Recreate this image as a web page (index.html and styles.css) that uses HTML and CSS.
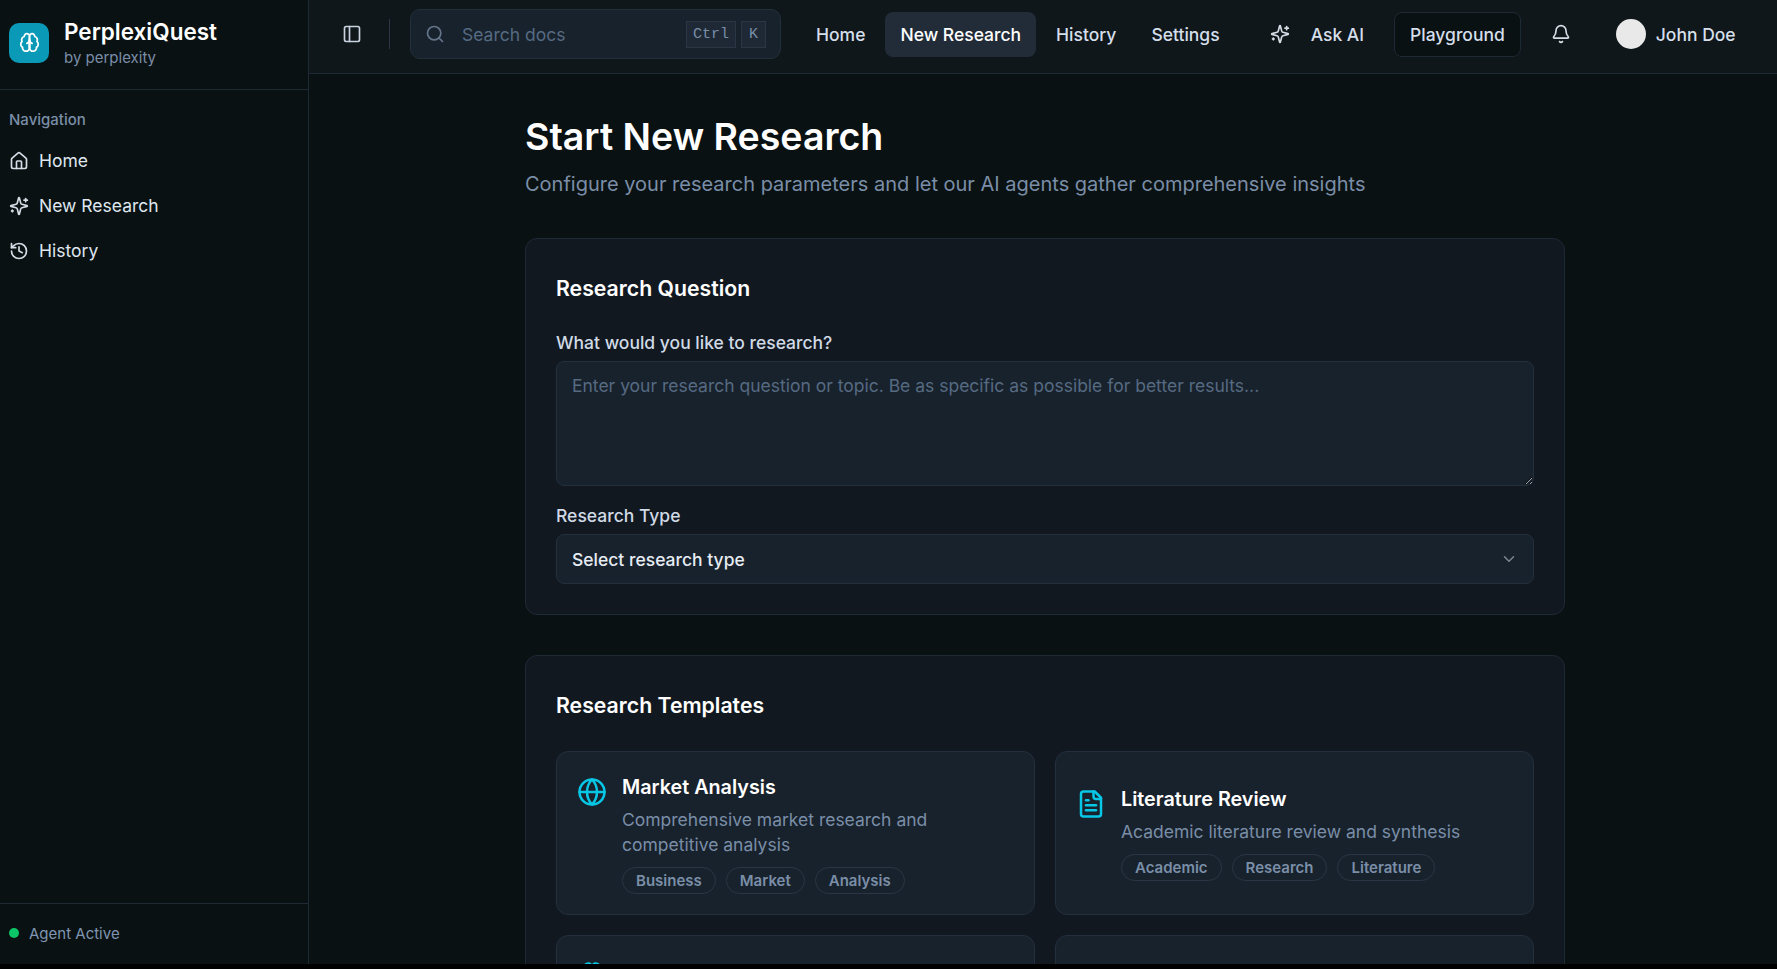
FILE: index.html
```html
<!DOCTYPE html>
<html lang="en">
<head>
  <meta charset="UTF-8" />
  <title>PerplexiQuest</title>
  <link rel="stylesheet" href="styles.css">
</head>
<body>
  <div class="app">

    <!-- sidebar -->
    <aside class="sidebar">
      <div class="brand">
        <div class="brand-logo">
          <svg class="icon" width="21" height="21" viewBox="0 0 24 24"><path d="M12 5a3 3 0 1 0-5.997.125 4 4 0 0 0-2.526 5.77 4 4 0 0 0 .556 6.588A4 4 0 1 0 12 18Z"/><path d="M12 5a3 3 0 1 1 5.997.125 4 4 0 0 1 2.526 5.77 4 4 0 0 1-.556 6.588A4 4 0 1 1 12 18Z"/><path d="M15 13a4.5 4.5 0 0 1-3-4 4.5 4.5 0 0 1-3 4"/><path d="M12 18v-9"/></svg>
        </div>
        <div class="brand-text">
          <div class="brand-name">PerplexiQuest</div>
          <div class="brand-sub">by perplexity</div>
        </div>
      </div>

      <nav class="side-nav">
        <div class="side-label">Navigation</div>
        <a class="side-link">
          <svg class="icon" width="20" height="20" viewBox="0 0 24 24"><path d="M15 21v-8a1 1 0 0 0-1-1h-4a1 1 0 0 0-1 1v8"/><path d="M3 10a2 2 0 0 1 .709-1.528l7-5.999a2 2 0 0 1 2.582 0l7 5.999A2 2 0 0 1 21 10v9a2 2 0 0 1-2 2H5a2 2 0 0 1-2-2z"/></svg>
          Home
        </a>
        <a class="side-link">
          <svg class="icon" width="20" height="20" viewBox="0 0 24 24"><path d="M9.937 15.5A2 2 0 0 0 8.5 14.063l-6.135-1.582a.5.5 0 0 1 0-.962L8.5 9.936A2 2 0 0 0 9.937 8.5l1.582-6.135a.5.5 0 0 1 .963 0L14.063 8.5A2 2 0 0 0 15.5 9.937l6.135 1.581a.5.5 0 0 1 0 .964L15.5 14.063a2 2 0 0 0-1.437 1.437l-1.582 6.135a.5.5 0 0 1-.963 0z"/><path d="M20 3v4"/><path d="M22 5h-4"/><path d="M4 17v2"/><path d="M5 18H3"/></svg>
          New Research
        </a>
        <a class="side-link">
          <svg class="icon" width="20" height="20" viewBox="0 0 24 24"><path d="M3 12a9 9 0 1 0 9-9 9.75 9.75 0 0 0-6.74 2.74L3 8"/><path d="M3 3v5h5"/><path d="M12 7v5l4 2"/></svg>
          History
        </a>
      </nav>

      <div class="side-footer">
        <span class="status-dot"></span>
        Agent Active
      </div>
    </aside>

    <div class="main">
      <!-- top bar -->
      <header class="topbar">
        <svg class="icon toggle" width="20" height="20" viewBox="0 0 24 24"><rect x="3" y="3" width="18" height="18" rx="2"/><path d="M9 3v18"/></svg>
        <div class="divider"></div>
        <div class="search">
          <svg class="icon" width="20" height="20" viewBox="0 0 24 24"><circle cx="11" cy="11" r="8"/><path d="m21 21-4.3-4.3"/></svg>
          <span class="search-text">Search docs</span>
          <kbd class="key">Ctrl</kbd>
          <kbd class="key">K</kbd>
        </div>
        <nav class="top-nav">
          <a class="top-link">Home</a>
          <a class="top-link active">New Research</a>
          <a class="top-link">History</a>
          <a class="top-link">Settings</a>
        </nav>
        <a class="ask-ai">
          <svg class="icon" width="20" height="20" viewBox="0 0 24 24"><path d="M9.937 15.5A2 2 0 0 0 8.5 14.063l-6.135-1.582a.5.5 0 0 1 0-.962L8.5 9.936A2 2 0 0 0 9.937 8.5l1.582-6.135a.5.5 0 0 1 .963 0L14.063 8.5A2 2 0 0 0 15.5 9.937l6.135 1.581a.5.5 0 0 1 0 .964L15.5 14.063a2 2 0 0 0-1.437 1.437l-1.582 6.135a.5.5 0 0 1-.963 0z"/><path d="M20 3v4"/><path d="M22 5h-4"/><path d="M4 17v2"/><path d="M5 18H3"/></svg>
          Ask AI
        </a>
        <a class="playground">Playground</a>
        <svg class="icon bell" width="20" height="20" viewBox="0 0 24 24"><path d="M10.268 21a2 2 0 0 0 3.464 0"/><path d="M3.262 15.326A1 1 0 0 0 4 17h16a1 1 0 0 0 .74-1.673C19.41 13.956 18 12.499 18 8A6 6 0 0 0 6 8c0 4.499-1.411 5.956-2.738 7.326"/></svg>
        <div class="user">
          <span class="avatar"></span>
          John Doe
        </div>
      </header>

      <!-- page body -->
      <main class="content">
        <h1 class="page-title">Start New Research</h1>
        <p class="page-sub">Configure your research parameters and let our AI agents gather comprehensive insights</p>

        <section class="panel">
          <h2 class="panel-title">Research Question</h2>
          <label class="field-label">What would you like to research?</label>
          <textarea class="question" placeholder="Enter your research question or topic. Be as specific as possible for better results..."></textarea>
          <label class="field-label type-label">Research Type</label>
          <div class="select">
            Select research type
            <svg class="icon" width="18" height="18" viewBox="0 0 24 24"><path d="m6 9 6 6 6-6"/></svg>
          </div>
        </section>

        <section class="panel">
          <h2 class="panel-title templates-title">Research Templates</h2>
          <div class="template-grid">
            <div class="template">
              <div class="template-row">
                <svg class="icon template-icon" width="30" height="30" viewBox="0 0 24 24"><circle cx="12" cy="12" r="10"/><path d="M12 2a14.5 14.5 0 0 0 0 20 14.5 14.5 0 0 0 0-20"/><path d="M2 12h20"/></svg>
                <div class="template-body">
                  <h3 class="template-name">Market Analysis</h3>
                  <p class="template-desc">Comprehensive market research and competitive analysis</p>
                  <div class="tags">
                    <span class="tag">Business</span>
                    <span class="tag">Market</span>
                    <span class="tag">Analysis</span>
                  </div>
                </div>
              </div>
            </div>
            <div class="template">
              <div class="template-row">
                <svg class="icon template-icon" width="30" height="30" viewBox="0 0 24 24"><path d="M15 2H6a2 2 0 0 0-2 2v16a2 2 0 0 0 2 2h12a2 2 0 0 0 2-2V7Z"/><path d="M14 2v4a2 2 0 0 0 2 2h4"/><path d="M10 9H8"/><path d="M16 13H8"/><path d="M16 17H8"/></svg>
                <div class="template-body">
                  <h3 class="template-name">Literature Review</h3>
                  <p class="template-desc">Academic literature review and synthesis</p>
                  <div class="tags">
                    <span class="tag">Academic</span>
                    <span class="tag">Research</span>
                    <span class="tag">Literature</span>
                  </div>
                </div>
              </div>
            </div>
            <div class="template template-cut">
              <svg class="icon template-icon" width="30" height="30" viewBox="0 0 24 24"><path d="M12 5a3 3 0 1 0-5.997.125 4 4 0 0 0-2.526 5.77 4 4 0 0 0 .556 6.588A4 4 0 1 0 12 18Z"/><path d="M12 5a3 3 0 1 1 5.997.125 4 4 0 0 1 2.526 5.77 4 4 0 0 1-.556 6.588A4 4 0 1 1 12 18Z"/></svg>
            </div>
            <div class="template"></div>
          </div>
        </section>
      </main>
    </div>
  </div>
</body>
</html>
```

FILE: styles.css
```css
/* page */
* {
  box-sizing: border-box;
}
body {
  margin: 0;
  background-color: #000;
  font-family: "Inter", "Liberation Sans", sans-serif;
  color: #e2e8f0;
}
.app {
  display: flex;
  height: 964px;
  overflow: hidden;
  background-color: #0a1112;
}
.icon {
  fill: none;
  stroke: currentColor;
  stroke-width: 2;
  stroke-linecap: round;
  stroke-linejoin: round;
  flex-shrink: 0;
}

/* sidebar */
.sidebar {
  width: 309px;
  flex-shrink: 0;
  display: flex;
  flex-direction: column;
  border-right: 1px solid #1e2936;
}
.brand {
  height: 90px;
  display: flex;
  align-items: center;
  gap: 15px;
  padding: 0 9px 4px;
  border-bottom: 1px solid #1e2936;
}
.brand-logo {
  width: 40px;
  height: 40px;
  border-radius: 10px;
  background-color: #0b99b8;
  color: #fff;
  display: flex;
  align-items: center;
  justify-content: center;
}
.brand-name {
  font-size: 22.5px;
  font-weight: 600;
  line-height: 30px;
  color: #fff;
}
.brand-sub {
  font-size: 15px;
  line-height: 22px;
  color: #7a8ea8;
}
.side-nav {
  flex: 1;
  padding: 20px 9px 0;
}
.side-label {
  font-size: 15px;
  font-weight: 500;
  line-height: 20px;
  color: #7a8ea8;
  margin-bottom: 8px;
}
.side-link {
  height: 45px;
  display: flex;
  align-items: center;
  gap: 10px;
  font-size: 17.5px;
  color: #dfe7f0;
}
.side-link .icon {
  color: #d5dde6;
}
.side-footer {
  height: 61px;
  flex-shrink: 0;
  display: flex;
  align-items: center;
  gap: 10px;
  padding: 0 9px 2px;
  border-top: 1px solid #1e2936;
  font-size: 15px;
  color: #7f95b1;
}
.status-dot {
  width: 10px;
  height: 10px;
  border-radius: 50%;
  background-color: #0bc566;
}

/* top bar */
.main {
  flex: 1;
  min-width: 0;
  display: flex;
  flex-direction: column;
}
.topbar {
  height: 74px;
  flex-shrink: 0;
  display: flex;
  align-items: center;
  padding: 0 0 5px 33px;
  background-color: #0f171a;
  border-bottom: 1px solid #1e2936;
}
.toggle {
  color: #c8d3df;
}
.divider {
  width: 1px;
  height: 30px;
  margin: 0 20px 0 27px;
  background-color: #2b3746;
}
.search {
  width: 371px;
  height: 50px;
  display: flex;
  align-items: center;
  padding: 0 14px;
  border: 1px solid #232f3d;
  border-radius: 10px;
  background-color: #18222c;
  color: #647589;
}
.search-text {
  flex: 1;
  margin-left: 17px;
  font-size: 17.5px;
  color: #566a82;
}
.key {
  min-width: 25px;
  height: 27px;
  display: flex;
  align-items: center;
  justify-content: center;
  padding: 0 6px;
  margin-left: 5px;
  border: 1px solid #2a3645;
  background-color: #1e2935;
  font-family: "Liberation Mono", monospace;
  font-size: 15px;
  color: #7a8ea8;
}
.top-nav {
  display: flex;
  margin-left: 20px;
  gap: 5px;
}
.top-link {
  height: 45px;
  display: flex;
  align-items: center;
  padding: 0 15px;
  border-radius: 8px;
  font-size: 17.5px;
  font-weight: 500;
  color: #d5dfeb;
}
.top-link.active {
  background-color: #212c38;
  color: #fff;
}
.ask-ai {
  display: flex;
  align-items: center;
  gap: 21px;
  margin-left: 35px;
  font-size: 17.5px;
  font-weight: 500;
  color: #d5dfeb;
}
.ask-ai .icon {
  color: #d5dde6;
}
.playground {
  height: 45px;
  display: flex;
  align-items: center;
  padding: 0 15px;
  margin-left: 30px;
  border: 1px solid #1e2936;
  border-radius: 8px;
  background-color: #0a1112;
  font-size: 17.5px;
  font-weight: 500;
  color: #d5dfeb;
}
.bell {
  margin-left: 30px;
  color: #d5dde6;
}
.user {
  display: flex;
  align-items: center;
  gap: 10px;
  margin-left: 45px;
  font-size: 17.5px;
  font-weight: 500;
  color: #d5dfeb;
}
.avatar {
  width: 30px;
  height: 30px;
  border-radius: 50%;
  background-color: #e9e9e9;
}

/* page body */
.content {
  flex: 1;
  overflow: hidden;
  padding: 40px 0 0 216px;
}
.page-title {
  margin: 0;
  font-size: 37.5px;
  font-weight: 600;
  line-height: 45px;
  color: #fff;
}
.page-sub {
  margin: 11px 0 0;
  font-size: 20px;
  line-height: 28px;
  color: #7a8ea8;
}
.panel {
  width: 1040px;
  margin-bottom: 40px;
  padding: 31px 30px 30px;
  border: 1px solid #1e2936;
  border-radius: 12px;
  background-color: #111820;
}
.page-sub + .panel {
  margin-top: 40px;
}
.panel-title {
  margin: 0 0 27px;
  font-size: 21.25px;
  font-weight: 600;
  line-height: 36px;
  color: #fff;
}
.field-label {
  display: block;
  margin-bottom: 8px;
  font-size: 17.5px;
  font-weight: 500;
  line-height: 20px;
  color: #d0dae6;
}
.type-label {
  margin-top: 20px;
}
.question {
  display: block;
  width: 100%;
  height: 125px;
  padding: 12px 15px;
  border: 1px solid #232f3d;
  border-radius: 8px;
  background-color: #18222c;
  font-family: inherit;
  font-size: 17.5px;
  line-height: 24px;
  color: #d5dfeb;
  outline: none;
}
.question::placeholder {
  color: #566a82;
}
.select {
  height: 50px;
  display: flex;
  align-items: center;
  justify-content: space-between;
  padding: 0 15px;
  border: 1px solid #232f3d;
  border-radius: 8px;
  background-color: #18222c;
  font-size: 17.5px;
  font-weight: 500;
  color: #e6ecf3;
}
.select .icon {
  color: #7d8792;
}

/* templates */
.templates-title {
  margin-bottom: 28px;
}
.template-grid {
  display: grid;
  grid-template-columns: 1fr 1fr;
  grid-auto-rows: 164px;
  gap: 20px;
}
.template {
  display: flex;
  align-items: center;
  padding: 0 20px;
  border: 1px solid #232f3d;
  border-radius: 12px;
  background-color: #18222c;
}
.template-cut {
  align-items: flex-start;
  padding-top: 21px;
}
.template-row {
  display: flex;
  align-items: flex-start;
  gap: 15px;
}
.template-icon {
  color: #06c8e6;
  margin-top: 4px;
}
.template-name {
  margin: 0;
  font-size: 19.75px;
  font-weight: 600;
  line-height: 28px;
  color: #fff;
}
.template-desc {
  margin: 6px 0 10px;
  font-size: 17.5px;
  line-height: 25px;
  color: #7a8ea8;
}
.tags {
  display: flex;
  gap: 10px;
}
.tag {
  height: 27px;
  display: flex;
  align-items: center;
  padding: 0 13px;
  border: 1px solid #2a3645;
  border-radius: 14px;
  font-size: 15px;
  font-weight: 600;
  color: #7a8ea8;
}
```
